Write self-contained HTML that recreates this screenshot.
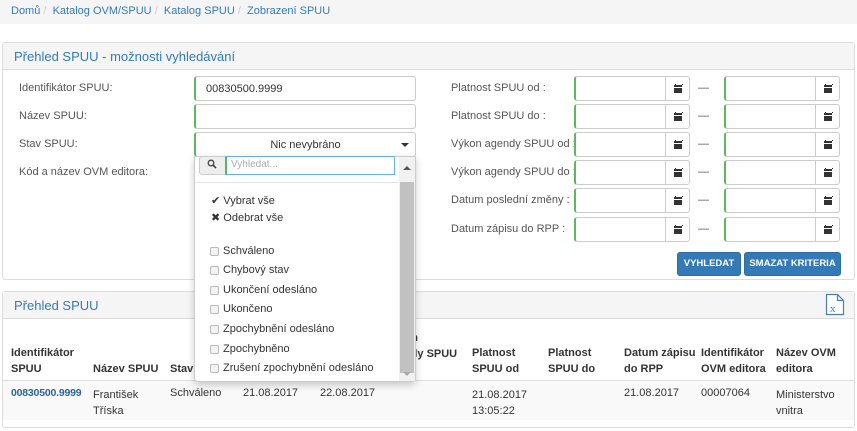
<!DOCTYPE html>
<html><head><meta charset="utf-8">
<style>
*{box-sizing:border-box;margin:0;padding:0}
body{width:857px;height:431px;background:#fff;font-family:"Liberation Sans",Arial,sans-serif;font-size:11px;color:#333;position:relative;overflow:hidden}
.a{position:absolute;white-space:nowrap}
.bc{left:0;top:0;width:857px;height:24px;background:#f5f5f5}
.panel{position:absolute;left:2px;width:853px;border:1px solid #ddd;border-radius:3px;background:#fff}
.ph{position:absolute;left:0;top:0;right:0;height:27px;background:#f5f5f5;border-bottom:1px solid #ddd;color:#337ab7;font-size:13px;padding:6px 11px}
.lbl{color:#555}
.inp{position:absolute;border:1px solid #ccc;border-left:2px solid #5cb85c;border-radius:3px 0 0 3px;background:#fff;height:25px}
.cb{position:absolute;border:1px solid #ccc;border-radius:0 3px 3px 0;background:#fff;width:25px;height:25px}
.cb i{position:absolute;left:8px;top:8px;width:8px;height:8px;background:#333}
.cb i:before{content:"";position:absolute;left:1px;top:-1px;width:6px;height:1px;border-left:1px solid #333;border-right:1px solid #333}
.cb i:after{content:"";position:absolute;left:0;top:2px;width:8px;height:1px;background:#fff}
.btn{position:absolute;background:#337ab7;border:1px solid #2e6da4;border-radius:3px;color:#fff;font-size:9.5px;font-weight:bold;text-align:center;line-height:22px;height:24px}
.th{font-weight:bold;color:#333;line-height:16px}
.chk{position:absolute;left:15px;width:9px;height:9px;border:1px solid #bbb;border-radius:2px;background:#f3f3f3}
.it{position:absolute;left:28px;color:#333}
</style></head><body>
<div class="a bc"></div>
<div class="a" style="left:11px;top:5px;color:#337ab7">Domů <span style="color:#ccc">/</span>&nbsp; Katalog OVM/SPUU <span style="color:#ccc">/</span>&nbsp; Katalog SPUU <span style="color:#ccc">/</span>&nbsp; Zobrazení SPUU</div>

<div class="panel" style="top:42px;height:238px"><div class="ph">Přehled SPUU - možnosti vyhledávání</div></div>
<div class="a lbl" style="left:19px;top:82px">Identifikátor SPUU:</div>
<div class="a lbl" style="left:19px;top:110px">Název SPUU:</div>
<div class="a lbl" style="left:19px;top:138px">Stav SPUU:</div>
<div class="a lbl" style="left:19px;top:166px">Kód a název OVM editora:</div>
<div class="inp" style="left:194px;top:76px;width:222px;border-radius:3px;padding:6px 10px">00830500.9999</div>
<div class="inp" style="left:194px;top:104px;width:222px;border-radius:3px"></div>
<div class="inp" style="left:194px;top:132px;width:222px;border-radius:3px;text-align:center;padding-top:6px">Nic nevybráno<span style="position:absolute;right:6px;top:10px;border:4px solid transparent;border-top:4px solid #333;border-bottom:0"></span></div>

<div class="a lbl" style="left:451px;top:82px">Platnost SPUU od :</div>
<div class="a lbl" style="left:451px;top:110px">Platnost SPUU do :</div>
<div class="a lbl" style="left:451px;top:138px">Výkon agendy SPUU od :</div>
<div class="a lbl" style="left:451px;top:166px">Výkon agendy SPUU do :</div>
<div class="a lbl" style="left:451px;top:194px">Datum poslední změny :</div>
<div class="a lbl" style="left:451px;top:223px">Datum zápisu do RPP :</div>

<div id="dates"></div>
<script>
var ys=[76,104,132,160,188,217],h="";
ys.forEach(function(y){
h+='<div class="inp" style="left:574px;top:'+y+'px;width:92px"></div><div class="cb" style="left:665px;top:'+y+'px"><i></i></div>';
h+='<div class="a" style="left:698px;top:'+(y+6)+'px;color:#555">—</div>';
h+='<div class="inp" style="left:724px;top:'+y+'px;width:92px"></div><div class="cb" style="left:815px;top:'+y+'px"><i></i></div>';
});
document.getElementById('dates').innerHTML=h;
</script>
<div class="btn" style="left:677px;top:252px;width:64px">VYHLEDAT</div>
<div class="btn" style="left:744px;top:252px;width:97px">SMAZAT KRITERIA</div>

<div class="panel" style="top:291px;height:137px"><div class="ph">Přehled SPUU</div></div>
<svg class="a" style="left:825px;top:293px" width="20" height="23" viewBox="0 0 20 23"><path d="M1.5 1.5h11l6 6v14h-17z M12.5 1.5v6h6" fill="#fff" stroke="#4a7fb5" stroke-width="1.2"/><text x="5" y="19" font-family="Liberation Serif" font-size="11" fill="#4a7fb5">x</text></svg>
<div class="a" style="left:3px;top:380px;width:851px;height:40px;background:#f9f9f9;border-top:1px solid #ddd"></div>
<div class="a th" style="left:11px;top:345px">Identifikátor<br>SPUU</div>
<div class="a th" style="left:93px;top:361px">Název SPUU</div>
<div class="a th" style="left:170px;top:361px">Stav</div>
<div class="a th" style="left:385px;top:330px">Výkon<br>agendy SPUU<br>do</div>
<div class="a th" style="left:472px;top:345px">Platnost<br>SPUU od</div>
<div class="a th" style="left:548px;top:345px">Platnost<br>SPUU do</div>
<div class="a th" style="left:624px;top:345px">Datum zápisu<br>do RPP</div>
<div class="a th" style="left:701px;top:345px">Identifikátor<br>OVM editora</div>
<div class="a th" style="left:776px;top:345px">Název OVM<br>editora</div>
<div class="a" style="left:11px;top:387px;color:#2a6496;font-weight:bold;font-size:10.5px;letter-spacing:-0.2px">00830500.9999</div>
<div class="a" style="left:93px;top:387px;line-height:16px">František<br>Tříska</div>
<div class="a" style="left:170px;top:387px">Schváleno</div>
<div class="a" style="left:243px;top:387px">21.08.2017</div>
<div class="a" style="left:320px;top:387px">22.08.2017</div>
<div class="a" style="left:472px;top:387px;line-height:16px">21.08.2017<br>13:05:22</div>
<div class="a" style="left:624px;top:387px">21.08.2017</div>
<div class="a" style="left:701px;top:387px">00007064</div>
<div class="a" style="left:776px;top:387px;line-height:16px">Ministerstvo<br>vnitra</div>

<!-- dropdown -->
<div class="a" style="left:194px;top:156px;width:222px;height:226px;background:#fff;border:1px solid #ccc;border-radius:0 0 4px 4px;box-shadow:0 3px 8px rgba(0,0,0,.2)">
 <div class="a" style="left:0;top:0;width:205px;height:26px;border-bottom:1px solid #e5e5e5"></div>
 <div class="a" style="left:4px;top:-1px;width:27px;height:19px;background:#eee;border:1px solid #ccc;border-radius:3px 0 0 3px"></div>
 <svg class="a" style="left:12px;top:2px" width="10" height="10" viewBox="0 0 10 10"><circle cx="4" cy="4" r="2.8" fill="none" stroke="#444" stroke-width="1.3"/><path d="M6 6l3 3" stroke="#444" stroke-width="1.6"/></svg>
 <div class="a" style="left:30px;top:-1px;width:170px;height:19px;border:1px solid #66afe9;border-left:2px solid #5cb85c;color:#aaa;font-size:10px;padding:2px 4px">Vyhledat...</div>
 <div class="a" style="left:204px;top:0;width:16px;height:224px;background:#f1f1f1"></div>
 <div class="a" style="left:205px;top:25px;width:14px;height:191px;background:#c1c1c1"></div>
 <div class="a" style="left:208px;top:9px;border:4px solid transparent;border-bottom:4px solid #555;border-top:0"></div>
 <div class="a" style="left:208px;top:215px;border:4px solid transparent;border-top:4px solid #aaa;border-bottom:0"></div>
 <div class="a" style="left:16px;top:37px;color:#333">✔ Vybrat vše</div>
 <div class="a" style="left:16px;top:54px;color:#333">✖ Odebrat vše</div>
 <div class="chk" style="top:90px"></div><div class="it" style="top:88px">Schváleno</div>
 <div class="chk" style="top:109px"></div><div class="it" style="top:107px">Chybový stav</div>
 <div class="chk" style="top:129px"></div><div class="it" style="top:127px">Ukončení odesláno</div>
 <div class="chk" style="top:148px"></div><div class="it" style="top:146px">Ukončeno</div>
 <div class="chk" style="top:168px"></div><div class="it" style="top:166px">Zpochybnění odesláno</div>
 <div class="chk" style="top:188px"></div><div class="it" style="top:186px">Zpochybněno</div>
 <div class="chk" style="top:207px"></div><div class="it" style="top:205px">Zrušení zpochybnění odesláno</div>
</div>
</body></html>
